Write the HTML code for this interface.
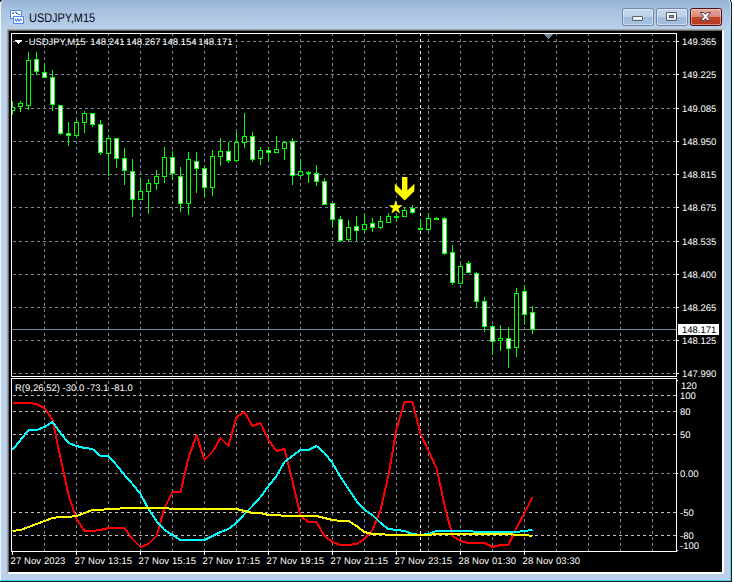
<!DOCTYPE html>
<html><head><meta charset="utf-8"><title>USDJPY,M15</title>
<style>
html,body{margin:0;padding:0;background:#fff;}
body{width:734px;height:582px;position:relative;overflow:hidden;font-family:"Liberation Sans",sans-serif;}
#win{position:absolute;left:0;top:0;width:731px;height:581px;background:linear-gradient(#98b4d4 0px,#a9c3e0 12px,#b9d1ea 30px,#b9d1ea 100%);border-right:1px solid #1c1c1c;border-bottom:1px solid #1c1c1c;}
#hl{position:absolute;left:0;top:0;width:729px;height:580px;border-left:1px solid #eef4fa;border-right:1px solid transparent;border-bottom:1px solid #3fd2f5;}
#frame{position:absolute;left:7px;top:29px;width:713px;height:541px;background:#000;border-style:solid;border-width:2px;border-color:#a0a0a0 #fff #fff #a0a0a0;}
#frame2{position:absolute;left:8px;top:30px;width:713px;height:541px;border-top:1px solid #696969;border-left:1px solid #696969;}
.t{position:absolute;font-size:9.5px;line-height:12px;white-space:pre;text-rendering:geometricPrecision;}
#title{position:absolute;left:28.5px;top:10px;font-size:12.5px;line-height:16px;letter-spacing:0px;color:#0a0a20;white-space:pre;text-rendering:geometricPrecision;transform:scaleX(0.875);transform-origin:0 0;}
.btn{position:absolute;top:8px;height:16px;width:30px;border:1px solid #6f87a5;border-radius:2.5px;background:linear-gradient(#c4d6ec 0,#bcd0e9 48%,#a0badb 52%,#a8c2e0 100%);box-shadow:inset 0 0 0 1px rgba(255,255,255,.45);}
#close{border-color:#4a1020;background:linear-gradient(#e9a99c 0,#d9897b 48%,#c2452b 52%,#b9391f 100%);box-shadow:inset 0 0 0 1px rgba(255,220,210,.5);}
</style></head><body>
<div id="win"></div><div id="hl"></div><div style="position:absolute;left:730px;top:0;width:1px;height:581px;background:linear-gradient(#c4eefa 0,#9fe4f8 14px,#5fd6f5 40px,#4fd3f5 100%)"></div><div style="position:absolute;left:0;top:0;width:2px;height:2px;background:#222"></div><div style="position:absolute;left:1px;top:1px;width:1px;height:1px;background:#fff"></div><div style="position:absolute;left:2px;top:0;width:1px;height:1px;background:#dde6f0"></div><div style="position:absolute;left:730px;top:0;width:1px;height:2px;background:#222;z-index:5"></div><div style="position:absolute;left:731px;top:0;width:1px;height:2px;background:#e8e8e8;z-index:5"></div><div style="position:absolute;left:729px;top:0;width:1px;height:2px;background:#d8f2fa"></div>
<div id="title">USDJPY,M15</div>
<svg width="18" height="18" viewBox="0 0 18 18" style="position:absolute;left:8px;top:8px" shape-rendering="crispEdges">
<rect x="1" y="1" width="16" height="16" fill="#c3d8ef" opacity="0.25"/>
<rect x="2.5" y="2.5" width="11" height="8" fill="#fff" stroke="#5a94f6"/><rect x="2.5" y="2.5" width="11" height="8" fill="none" stroke="#3f7de8" stroke-dasharray="1 1"/>
<rect x="3" y="3" width="10" height="7" fill="none" stroke="#7ab0ff" stroke-width="0"/>
<path d="M4 5h2M5 4v1M7 4h2M8 5h2M10 6h2" stroke="#3b78ee" fill="none"/>
<rect x="5.5" y="8.5" width="10" height="7" fill="#fff" stroke="#5a94f6"/><rect x="5.5" y="8.5" width="10" height="7" fill="none" stroke="#3f7de8" stroke-dasharray="1 1"/>
<path d="M7 10.5l1.3 3l1.4-3l1.4 3l1.4-3l1 2" stroke="#2f6fe6" fill="none" stroke-width="1" shape-rendering="auto"/>
</svg>
<div class="btn" style="left:622px"><div style="position:absolute;left:9px;top:7px;width:9px;height:3px;background:linear-gradient(#fff,#e4e8ee);border:1px solid #565e6c;border-radius:1px"></div></div>
<div class="btn" style="left:656px"><div style="position:absolute;left:9px;top:3px;width:9px;height:7px;background:linear-gradient(#fff,#e0e4ea);border:1px solid #565e6c;border-radius:1px"></div><div style="position:absolute;left:12px;top:6px;width:3px;height:1px;background:#7a9ac6;border:1px solid #4d5a70"></div></div>
<div class="btn" id="close" style="left:690px"><svg width="13" height="11" viewBox="0 0 13 11" style="position:absolute;left:8px;top:2px"><path d="M1.5 1.5h3.4l1.6 2l1.6-2h3.4l-3.2 4l3.2 4h-3.4l-1.6-2l-1.6 2h-3.4l3.2-4z" fill="#fff" stroke="#4a4450" stroke-width="1" stroke-linejoin="round"/></svg></div>
<div id="frame"></div><div id="frame2"></div>
<svg width="734" height="582" viewBox="0 0 734 582" style="position:absolute;left:0;top:0" shape-rendering="crispEdges"><clipPath id="cv"><rect x="12" y="34" width="664" height="342"/><rect x="12" y="379" width="664" height="172"/></clipPath><line x1="13" y1="41.5" x2="676" y2="41.5" stroke="#778899" stroke-dasharray="3 3"/><line x1="13" y1="74.5" x2="676" y2="74.5" stroke="#778899" stroke-dasharray="3 3"/><line x1="13" y1="108.5" x2="676" y2="108.5" stroke="#778899" stroke-dasharray="3 3"/><line x1="13" y1="141.5" x2="676" y2="141.5" stroke="#778899" stroke-dasharray="3 3"/><line x1="13" y1="174.5" x2="676" y2="174.5" stroke="#778899" stroke-dasharray="3 3"/><line x1="13" y1="207.5" x2="676" y2="207.5" stroke="#778899" stroke-dasharray="3 3"/><line x1="13" y1="241.5" x2="676" y2="241.5" stroke="#778899" stroke-dasharray="3 3"/><line x1="13" y1="274.5" x2="676" y2="274.5" stroke="#778899" stroke-dasharray="3 3"/><line x1="13" y1="307.5" x2="676" y2="307.5" stroke="#778899" stroke-dasharray="3 3"/><line x1="13" y1="340.5" x2="676" y2="340.5" stroke="#778899" stroke-dasharray="3 3"/><line x1="13" y1="373.5" x2="676" y2="373.5" stroke="#778899" stroke-dasharray="3 3"/><line x1="44.5" y1="33" x2="44.5" y2="376" stroke="#778899" stroke-dasharray="3 3" clip-path="url(#cv)"/><line x1="44.5" y1="375" x2="44.5" y2="551" stroke="#778899" stroke-dasharray="3 3" clip-path="url(#cv)"/><line x1="76.5" y1="33" x2="76.5" y2="376" stroke="#778899" stroke-dasharray="3 3" clip-path="url(#cv)"/><line x1="76.5" y1="375" x2="76.5" y2="551" stroke="#778899" stroke-dasharray="3 3" clip-path="url(#cv)"/><line x1="108.5" y1="33" x2="108.5" y2="376" stroke="#778899" stroke-dasharray="3 3" clip-path="url(#cv)"/><line x1="108.5" y1="375" x2="108.5" y2="551" stroke="#778899" stroke-dasharray="3 3" clip-path="url(#cv)"/><line x1="140.5" y1="33" x2="140.5" y2="376" stroke="#778899" stroke-dasharray="3 3" clip-path="url(#cv)"/><line x1="140.5" y1="375" x2="140.5" y2="551" stroke="#778899" stroke-dasharray="3 3" clip-path="url(#cv)"/><line x1="172.5" y1="33" x2="172.5" y2="376" stroke="#778899" stroke-dasharray="3 3" clip-path="url(#cv)"/><line x1="172.5" y1="375" x2="172.5" y2="551" stroke="#778899" stroke-dasharray="3 3" clip-path="url(#cv)"/><line x1="204.5" y1="33" x2="204.5" y2="376" stroke="#778899" stroke-dasharray="3 3" clip-path="url(#cv)"/><line x1="204.5" y1="375" x2="204.5" y2="551" stroke="#778899" stroke-dasharray="3 3" clip-path="url(#cv)"/><line x1="236.5" y1="33" x2="236.5" y2="376" stroke="#778899" stroke-dasharray="3 3" clip-path="url(#cv)"/><line x1="236.5" y1="375" x2="236.5" y2="551" stroke="#778899" stroke-dasharray="3 3" clip-path="url(#cv)"/><line x1="268.5" y1="33" x2="268.5" y2="376" stroke="#778899" stroke-dasharray="3 3" clip-path="url(#cv)"/><line x1="268.5" y1="375" x2="268.5" y2="551" stroke="#778899" stroke-dasharray="3 3" clip-path="url(#cv)"/><line x1="300.5" y1="33" x2="300.5" y2="376" stroke="#778899" stroke-dasharray="3 3" clip-path="url(#cv)"/><line x1="300.5" y1="375" x2="300.5" y2="551" stroke="#778899" stroke-dasharray="3 3" clip-path="url(#cv)"/><line x1="332.5" y1="33" x2="332.5" y2="376" stroke="#778899" stroke-dasharray="3 3" clip-path="url(#cv)"/><line x1="332.5" y1="375" x2="332.5" y2="551" stroke="#778899" stroke-dasharray="3 3" clip-path="url(#cv)"/><line x1="364.5" y1="33" x2="364.5" y2="376" stroke="#778899" stroke-dasharray="3 3" clip-path="url(#cv)"/><line x1="364.5" y1="375" x2="364.5" y2="551" stroke="#778899" stroke-dasharray="3 3" clip-path="url(#cv)"/><line x1="396.5" y1="33" x2="396.5" y2="376" stroke="#778899" stroke-dasharray="3 3" clip-path="url(#cv)"/><line x1="396.5" y1="375" x2="396.5" y2="551" stroke="#778899" stroke-dasharray="3 3" clip-path="url(#cv)"/><line x1="428.5" y1="33" x2="428.5" y2="376" stroke="#778899" stroke-dasharray="3 3" clip-path="url(#cv)"/><line x1="428.5" y1="375" x2="428.5" y2="551" stroke="#778899" stroke-dasharray="3 3" clip-path="url(#cv)"/><line x1="460.5" y1="33" x2="460.5" y2="376" stroke="#778899" stroke-dasharray="3 3" clip-path="url(#cv)"/><line x1="460.5" y1="375" x2="460.5" y2="551" stroke="#778899" stroke-dasharray="3 3" clip-path="url(#cv)"/><line x1="492.5" y1="33" x2="492.5" y2="376" stroke="#778899" stroke-dasharray="3 3" clip-path="url(#cv)"/><line x1="492.5" y1="375" x2="492.5" y2="551" stroke="#778899" stroke-dasharray="3 3" clip-path="url(#cv)"/><line x1="524.5" y1="33" x2="524.5" y2="376" stroke="#778899" stroke-dasharray="3 3" clip-path="url(#cv)"/><line x1="524.5" y1="375" x2="524.5" y2="551" stroke="#778899" stroke-dasharray="3 3" clip-path="url(#cv)"/><line x1="556.5" y1="33" x2="556.5" y2="376" stroke="#778899" stroke-dasharray="3 3" clip-path="url(#cv)"/><line x1="556.5" y1="375" x2="556.5" y2="551" stroke="#778899" stroke-dasharray="3 3" clip-path="url(#cv)"/><line x1="588.5" y1="33" x2="588.5" y2="376" stroke="#778899" stroke-dasharray="3 3" clip-path="url(#cv)"/><line x1="588.5" y1="375" x2="588.5" y2="551" stroke="#778899" stroke-dasharray="3 3" clip-path="url(#cv)"/><line x1="620.5" y1="33" x2="620.5" y2="376" stroke="#778899" stroke-dasharray="3 3" clip-path="url(#cv)"/><line x1="620.5" y1="375" x2="620.5" y2="551" stroke="#778899" stroke-dasharray="3 3" clip-path="url(#cv)"/><line x1="652.5" y1="33" x2="652.5" y2="376" stroke="#778899" stroke-dasharray="3 3" clip-path="url(#cv)"/><line x1="652.5" y1="375" x2="652.5" y2="551" stroke="#778899" stroke-dasharray="3 3" clip-path="url(#cv)"/><line x1="420.5" y1="33" x2="420.5" y2="376" stroke="#ffffff" stroke-dasharray="3 3" clip-path="url(#cv)"/><line x1="420.5" y1="375" x2="420.5" y2="551" stroke="#ffffff" stroke-dasharray="3 3" clip-path="url(#cv)"/><line x1="13" y1="395.5" x2="676" y2="395.5" stroke="#c0c0c0" stroke-dasharray="3 3"/><line x1="13" y1="411.5" x2="676" y2="411.5" stroke="#c0c0c0" stroke-dasharray="3 3"/><line x1="13" y1="434.5" x2="676" y2="434.5" stroke="#c0c0c0" stroke-dasharray="3 3"/><line x1="13" y1="512.5" x2="676" y2="512.5" stroke="#c0c0c0" stroke-dasharray="3 3"/><line x1="13" y1="535.5" x2="676" y2="535.5" stroke="#c0c0c0" stroke-dasharray="3 3"/><line x1="13" y1="473.5" x2="676" y2="473.5" stroke="#778899" stroke-dasharray="3 3"/><rect x="12" y="329" width="664" height="1" fill="#778899"/><g fill="#fff"><rect x="11" y="33" width="666" height="1"/><rect x="11" y="376" width="666" height="1"/><rect x="11" y="33" width="1" height="344"/><rect x="676" y="33" width="1" height="344"/><rect x="11" y="378" width="666" height="1"/><rect x="11" y="551" width="666" height="1"/><rect x="11" y="378" width="1" height="174"/><rect x="676" y="378" width="1" height="174"/><rect x="677" y="41" width="2" height="1"/><rect x="677" y="74" width="2" height="1"/><rect x="677" y="108" width="2" height="1"/><rect x="677" y="141" width="2" height="1"/><rect x="677" y="174" width="2" height="1"/><rect x="677" y="207" width="2" height="1"/><rect x="677" y="241" width="2" height="1"/><rect x="677" y="274" width="2" height="1"/><rect x="677" y="307" width="2" height="1"/><rect x="677" y="340" width="2" height="1"/><rect x="677" y="373" width="2" height="1"/><rect x="677" y="380" width="1" height="1"/><rect x="677" y="473" width="1" height="1"/><rect x="677" y="550" width="1" height="1"/><rect x="12" y="552" width="1" height="3"/><rect x="76" y="552" width="1" height="3"/><rect x="140" y="552" width="1" height="3"/><rect x="204" y="552" width="1" height="3"/><rect x="268" y="552" width="1" height="3"/><rect x="332" y="552" width="1" height="3"/><rect x="396" y="552" width="1" height="3"/><rect x="460" y="552" width="1" height="3"/><rect x="524" y="552" width="1" height="3"/></g><path d="M544 34h9v1h-1v1h-1v1h-1v1h-1v1h-1v-1h-1v-1h-1v-1h-1v-1h-1z" fill="#778899"/><clipPath id="cm"><rect x="12" y="34" width="664" height="342"/></clipPath><g clip-path="url(#cm)"><rect x="12" y="101" width="1" height="14" fill="#00ff00"/><rect x="10" y="107" width="5" height="4" fill="#00ff00"/><rect x="11" y="108" width="3" height="2" fill="#000"/><rect x="20" y="101" width="1" height="11" fill="#00ff00"/><rect x="18" y="103" width="5" height="4" fill="#00ff00"/><rect x="19" y="104" width="3" height="2" fill="#000"/><rect x="28" y="52" width="1" height="58" fill="#00ff00"/><rect x="26" y="60" width="5" height="46" fill="#00ff00"/><rect x="27" y="61" width="3" height="44" fill="#000"/><rect x="36" y="52" width="1" height="23" fill="#00ff00"/><rect x="34" y="59" width="5" height="13" fill="#00ff00"/><rect x="35" y="60" width="3" height="11" fill="#fff"/><rect x="44" y="64" width="1" height="14" fill="#00ff00"/><rect x="42" y="72" width="5" height="6" fill="#00ff00"/><rect x="43" y="73" width="3" height="4" fill="#fff"/><rect x="52" y="70" width="1" height="41" fill="#00ff00"/><rect x="50" y="77" width="5" height="28" fill="#00ff00"/><rect x="51" y="78" width="3" height="26" fill="#fff"/><rect x="60" y="105" width="1" height="30" fill="#00ff00"/><rect x="58" y="105" width="5" height="29" fill="#00ff00"/><rect x="59" y="106" width="3" height="27" fill="#fff"/><rect x="68" y="122" width="1" height="24" fill="#00ff00"/><rect x="66" y="133" width="5" height="3" fill="#00ff00"/><rect x="67" y="134" width="3" height="1" fill="#fff"/><rect x="76" y="119" width="1" height="19" fill="#00ff00"/><rect x="74" y="122" width="5" height="14" fill="#00ff00"/><rect x="75" y="123" width="3" height="12" fill="#000"/><rect x="84" y="111" width="1" height="22" fill="#00ff00"/><rect x="82" y="113" width="5" height="10" fill="#00ff00"/><rect x="83" y="114" width="3" height="8" fill="#000"/><rect x="92" y="113" width="1" height="14" fill="#00ff00"/><rect x="90" y="113" width="5" height="12" fill="#00ff00"/><rect x="91" y="114" width="3" height="10" fill="#fff"/><rect x="100" y="120" width="1" height="35" fill="#00ff00"/><rect x="98" y="124" width="5" height="29" fill="#00ff00"/><rect x="99" y="125" width="3" height="27" fill="#fff"/><rect x="108" y="135" width="1" height="41" fill="#00ff00"/><rect x="106" y="138" width="5" height="16" fill="#00ff00"/><rect x="107" y="139" width="3" height="14" fill="#000"/><rect x="116" y="138" width="1" height="30" fill="#00ff00"/><rect x="114" y="138" width="5" height="21" fill="#00ff00"/><rect x="115" y="139" width="3" height="19" fill="#fff"/><rect x="124" y="148" width="1" height="37" fill="#00ff00"/><rect x="122" y="158" width="5" height="13" fill="#00ff00"/><rect x="123" y="159" width="3" height="11" fill="#fff"/><rect x="132" y="159" width="1" height="58" fill="#00ff00"/><rect x="130" y="171" width="5" height="29" fill="#00ff00"/><rect x="131" y="172" width="3" height="27" fill="#fff"/><rect x="140" y="178" width="1" height="22" fill="#00ff00"/><rect x="138" y="191" width="5" height="9" fill="#00ff00"/><rect x="139" y="192" width="3" height="7" fill="#000"/><rect x="148" y="179" width="1" height="35" fill="#00ff00"/><rect x="146" y="183" width="5" height="9" fill="#00ff00"/><rect x="147" y="184" width="3" height="7" fill="#000"/><rect x="156" y="170" width="1" height="20" fill="#00ff00"/><rect x="154" y="176" width="5" height="8" fill="#00ff00"/><rect x="155" y="177" width="3" height="6" fill="#000"/><rect x="164" y="147" width="1" height="36" fill="#00ff00"/><rect x="162" y="157" width="5" height="20" fill="#00ff00"/><rect x="163" y="158" width="3" height="18" fill="#000"/><rect x="172" y="151" width="1" height="29" fill="#00ff00"/><rect x="170" y="157" width="5" height="17" fill="#00ff00"/><rect x="171" y="158" width="3" height="15" fill="#fff"/><rect x="180" y="167" width="1" height="45" fill="#00ff00"/><rect x="178" y="176" width="5" height="28" fill="#00ff00"/><rect x="179" y="177" width="3" height="26" fill="#fff"/><rect x="188" y="152" width="1" height="63" fill="#00ff00"/><rect x="186" y="159" width="5" height="45" fill="#00ff00"/><rect x="187" y="160" width="3" height="43" fill="#000"/><rect x="196" y="152" width="1" height="41" fill="#00ff00"/><rect x="194" y="161" width="5" height="8" fill="#00ff00"/><rect x="195" y="162" width="3" height="6" fill="#fff"/><rect x="204" y="166" width="1" height="32" fill="#00ff00"/><rect x="202" y="168" width="5" height="20" fill="#00ff00"/><rect x="203" y="169" width="3" height="18" fill="#fff"/><rect x="212" y="150" width="1" height="46" fill="#00ff00"/><rect x="210" y="156" width="5" height="32" fill="#00ff00"/><rect x="211" y="157" width="3" height="30" fill="#000"/><rect x="220" y="138" width="1" height="28" fill="#00ff00"/><rect x="218" y="151" width="5" height="6" fill="#00ff00"/><rect x="219" y="152" width="3" height="4" fill="#000"/><rect x="228" y="142" width="1" height="21" fill="#00ff00"/><rect x="226" y="151" width="5" height="10" fill="#00ff00"/><rect x="227" y="152" width="3" height="8" fill="#fff"/><rect x="236" y="132" width="1" height="30" fill="#00ff00"/><rect x="234" y="142" width="5" height="19" fill="#00ff00"/><rect x="235" y="143" width="3" height="17" fill="#000"/><rect x="244" y="113" width="1" height="35" fill="#00ff00"/><rect x="242" y="136" width="5" height="7" fill="#00ff00"/><rect x="243" y="137" width="3" height="5" fill="#000"/><rect x="252" y="132" width="1" height="30" fill="#00ff00"/><rect x="250" y="136" width="5" height="24" fill="#00ff00"/><rect x="251" y="137" width="3" height="22" fill="#fff"/><rect x="260" y="147" width="1" height="18" fill="#00ff00"/><rect x="258" y="150" width="5" height="9" fill="#00ff00"/><rect x="259" y="151" width="3" height="7" fill="#000"/><rect x="268" y="147" width="1" height="15" fill="#00ff00"/><rect x="266" y="150" width="5" height="3" fill="#00ff00"/><rect x="267" y="151" width="3" height="1" fill="#fff"/><rect x="276" y="136" width="1" height="17" fill="#00ff00"/><rect x="274" y="149" width="5" height="4" fill="#00ff00"/><rect x="275" y="150" width="3" height="2" fill="#000"/><rect x="284" y="141" width="1" height="19" fill="#00ff00"/><rect x="282" y="142" width="5" height="7" fill="#00ff00"/><rect x="283" y="143" width="3" height="5" fill="#000"/><rect x="292" y="138" width="1" height="47" fill="#00ff00"/><rect x="290" y="141" width="5" height="35" fill="#00ff00"/><rect x="291" y="142" width="3" height="33" fill="#fff"/><rect x="300" y="159" width="1" height="18" fill="#00ff00"/><rect x="298" y="171" width="5" height="5" fill="#00ff00"/><rect x="299" y="172" width="3" height="3" fill="#000"/><rect x="308" y="171" width="1" height="12" fill="#00ff00"/><rect x="306" y="172" width="5" height="2" fill="#00ff00"/><rect x="316" y="165" width="1" height="21" fill="#00ff00"/><rect x="314" y="173" width="5" height="9" fill="#00ff00"/><rect x="315" y="174" width="3" height="7" fill="#fff"/><rect x="324" y="178" width="1" height="27" fill="#00ff00"/><rect x="322" y="181" width="5" height="24" fill="#00ff00"/><rect x="323" y="182" width="3" height="22" fill="#fff"/><rect x="332" y="203" width="1" height="24" fill="#00ff00"/><rect x="330" y="203" width="5" height="17" fill="#00ff00"/><rect x="331" y="204" width="3" height="15" fill="#fff"/><rect x="340" y="216" width="1" height="26" fill="#00ff00"/><rect x="338" y="219" width="5" height="22" fill="#00ff00"/><rect x="339" y="220" width="3" height="20" fill="#fff"/><rect x="348" y="220" width="1" height="22" fill="#00ff00"/><rect x="346" y="227" width="5" height="13" fill="#00ff00"/><rect x="347" y="228" width="3" height="11" fill="#000"/><rect x="356" y="216" width="1" height="25" fill="#00ff00"/><rect x="354" y="226" width="5" height="5" fill="#00ff00"/><rect x="355" y="227" width="3" height="3" fill="#fff"/><rect x="364" y="214" width="1" height="19" fill="#00ff00"/><rect x="362" y="224" width="5" height="6" fill="#00ff00"/><rect x="363" y="225" width="3" height="4" fill="#000"/><rect x="372" y="218" width="1" height="14" fill="#00ff00"/><rect x="370" y="223" width="5" height="5" fill="#00ff00"/><rect x="371" y="224" width="3" height="3" fill="#fff"/><rect x="380" y="216" width="1" height="13" fill="#00ff00"/><rect x="378" y="221" width="5" height="7" fill="#00ff00"/><rect x="379" y="222" width="3" height="5" fill="#000"/><rect x="388" y="213" width="1" height="10" fill="#00ff00"/><rect x="386" y="216" width="5" height="7" fill="#00ff00"/><rect x="387" y="217" width="3" height="5" fill="#000"/><rect x="396" y="213" width="1" height="8" fill="#00ff00"/><rect x="394" y="216" width="5" height="2" fill="#00ff00"/><rect x="404" y="207" width="1" height="10" fill="#00ff00"/><rect x="402" y="210" width="5" height="7" fill="#00ff00"/><rect x="403" y="211" width="3" height="5" fill="#000"/><rect x="412" y="205" width="1" height="9" fill="#00ff00"/><rect x="410" y="208" width="5" height="5" fill="#00ff00"/><rect x="411" y="209" width="3" height="3" fill="#fff"/><rect x="420" y="219" width="1" height="11" fill="#00ff00"/><rect x="418" y="228" width="5" height="2" fill="#00ff00"/><rect x="428" y="213" width="1" height="18" fill="#00ff00"/><rect x="426" y="218" width="5" height="12" fill="#00ff00"/><rect x="427" y="219" width="3" height="10" fill="#000"/><rect x="436" y="217" width="1" height="3" fill="#00ff00"/><rect x="434" y="218" width="5" height="2" fill="#00ff00"/><rect x="444" y="217" width="1" height="38" fill="#00ff00"/><rect x="442" y="218" width="5" height="36" fill="#00ff00"/><rect x="443" y="219" width="3" height="34" fill="#fff"/><rect x="452" y="245" width="1" height="40" fill="#00ff00"/><rect x="450" y="252" width="5" height="31" fill="#00ff00"/><rect x="451" y="253" width="3" height="29" fill="#fff"/><rect x="460" y="264" width="1" height="20" fill="#00ff00"/><rect x="458" y="266" width="5" height="18" fill="#00ff00"/><rect x="459" y="267" width="3" height="16" fill="#000"/><rect x="468" y="261" width="1" height="12" fill="#00ff00"/><rect x="466" y="263" width="5" height="10" fill="#00ff00"/><rect x="467" y="264" width="3" height="8" fill="#fff"/><rect x="476" y="272" width="1" height="36" fill="#00ff00"/><rect x="474" y="273" width="5" height="29" fill="#00ff00"/><rect x="475" y="274" width="3" height="27" fill="#fff"/><rect x="484" y="297" width="1" height="35" fill="#00ff00"/><rect x="482" y="301" width="5" height="26" fill="#00ff00"/><rect x="483" y="302" width="3" height="24" fill="#fff"/><rect x="492" y="325" width="1" height="30" fill="#00ff00"/><rect x="490" y="326" width="5" height="16" fill="#00ff00"/><rect x="491" y="327" width="3" height="14" fill="#fff"/><rect x="500" y="325" width="1" height="26" fill="#00ff00"/><rect x="498" y="338" width="5" height="3" fill="#00ff00"/><rect x="499" y="339" width="3" height="1" fill="#000"/><rect x="508" y="327" width="1" height="41" fill="#00ff00"/><rect x="506" y="338" width="5" height="11" fill="#00ff00"/><rect x="507" y="339" width="3" height="9" fill="#fff"/><rect x="516" y="288" width="1" height="69" fill="#00ff00"/><rect x="514" y="293" width="5" height="55" fill="#00ff00"/><rect x="515" y="294" width="3" height="53" fill="#000"/><rect x="524" y="285" width="1" height="40" fill="#00ff00"/><rect x="522" y="291" width="5" height="24" fill="#00ff00"/><rect x="523" y="292" width="3" height="22" fill="#fff"/><rect x="532" y="306" width="1" height="28" fill="#00ff00"/><rect x="530" y="312" width="5" height="18" fill="#00ff00"/><rect x="531" y="313" width="3" height="16" fill="#fff"/></g><g fill="#ffff00" shape-rendering="auto"><path d="M402 177h5.4v13.6l7-6.9v7.3l-9.7 9.6l-9.9-9.6v-7.3l7.2 6.9z"/><polygon points="395.70,200.20 397.40,205.25 402.74,205.31 398.46,208.50 400.05,213.59 395.70,210.50 391.35,213.59 392.94,208.50 388.66,205.31 394.00,205.25"/></g><clipPath id="cs"><rect x="12" y="379" width="664" height="172"/></clipPath><g clip-path="url(#cs)" fill="none" stroke-width="2" stroke-linejoin="round"><polyline stroke="#ff0000" points="12.5,403 20.5,403 28.5,403 36.5,404 44.5,408 52.5,420 60.5,458 68.5,495 76.5,519 84.5,531 92.5,531 100.5,530 108.5,528 116.5,528 124.5,528 132.5,539 140.5,547 148.5,544 156.5,536 164.5,508 172.5,492 180.5,492 188.5,458 196.5,435 204.5,460 212.5,452 220.5,438 228.5,446 236.5,417 244.5,412 252.5,426 260.5,423 268.5,440 276.5,451 284.5,449 292.5,481 300.5,516 308.5,522 316.5,522 324.5,536 332.5,542 340.5,545 348.5,545 356.5,544 364.5,539 372.5,530 380.5,510 388.5,475 396.5,429 404.5,402 412.5,402 420.5,434 428.5,451 436.5,468 444.5,505 452.5,536 460.5,541 468.5,543 476.5,543 484.5,543 492.5,547 500.5,545 508.5,545 516.5,528 524.5,513 532.5,497"/><polyline stroke="#00ffff" points="12.5,450 20.5,440 28.5,430 36.5,430 44.5,427 52.5,422 60.5,433 68.5,443 76.5,446 84.5,448 92.5,449 100.5,456 108.5,456 116.5,465 124.5,475 132.5,484 140.5,494 148.5,509 156.5,521 164.5,530 172.5,535 180.5,540 188.5,540 196.5,540 204.5,540 212.5,536 220.5,532 228.5,529 236.5,523 244.5,514 252.5,506 260.5,497 268.5,486 276.5,476 284.5,462 292.5,456 300.5,450 308.5,450 316.5,446 324.5,453 332.5,463 340.5,477 348.5,489 356.5,501 364.5,510 372.5,515 380.5,523 388.5,529 396.5,530 404.5,531 412.5,534 420.5,535 428.5,534 436.5,531 444.5,531 452.5,531 460.5,531 468.5,531 476.5,532 484.5,532 492.5,532 500.5,532 508.5,532 516.5,532 524.5,531 532.5,530"/><polyline stroke="#ffff00" points="12.5,531 20.5,530 28.5,527 36.5,524 44.5,521 52.5,518 60.5,517 68.5,517 76.5,516 84.5,513 92.5,510 100.5,510 108.5,509 116.5,509 124.5,508 132.5,508 140.5,508 148.5,508 156.5,508 164.5,508 172.5,509 180.5,509 188.5,509 196.5,509 204.5,509 212.5,509 220.5,509 228.5,509 236.5,509 244.5,511 252.5,513 260.5,513 268.5,515 276.5,515 284.5,516 292.5,516 300.5,516 308.5,516 316.5,516 324.5,518 332.5,520 340.5,521 348.5,521 356.5,526 364.5,532 372.5,534 380.5,534 388.5,535 396.5,535 404.5,535 412.5,535 420.5,535 428.5,535 436.5,534 444.5,534 452.5,534 460.5,534 468.5,534 476.5,534 484.5,534 492.5,534 500.5,534 508.5,534 516.5,535 524.5,535 532.5,536"/></g><path d="M15 40h7v1h-1v1h-1v1h-1v1h-1v-1h-1v-1h-1v-1h-1z" fill="#fff"/></svg>
<span class="t" style="left:682px;top:37px;color:#fff;letter-spacing:0px;">149.365</span><span class="t" style="left:682px;top:70px;color:#fff;letter-spacing:0px;">149.225</span><span class="t" style="left:682px;top:104px;color:#fff;letter-spacing:0px;">149.085</span><span class="t" style="left:682px;top:137px;color:#fff;letter-spacing:0px;">148.950</span><span class="t" style="left:682px;top:170px;color:#fff;letter-spacing:0px;">148.815</span><span class="t" style="left:682px;top:203px;color:#fff;letter-spacing:0px;">148.675</span><span class="t" style="left:682px;top:237px;color:#fff;letter-spacing:0px;">148.535</span><span class="t" style="left:682px;top:270px;color:#fff;letter-spacing:0px;">148.400</span><span class="t" style="left:682px;top:303px;color:#fff;letter-spacing:0px;">148.265</span><span class="t" style="left:682px;top:336px;color:#fff;letter-spacing:0px;">148.125</span><span class="t" style="left:682px;top:369px;color:#fff;letter-spacing:0px;">147.990</span><span class="t" style="left:680px;top:391px;color:#fff;letter-spacing:0px;">100</span><span class="t" style="left:680px;top:407px;color:#fff;letter-spacing:0px;">80</span><span class="t" style="left:680px;top:430px;color:#fff;letter-spacing:0px;">50</span><span class="t" style="left:680px;top:469px;color:#fff;letter-spacing:0px;">0.00</span><span class="t" style="left:680px;top:508px;color:#fff;letter-spacing:0px;">-50</span><span class="t" style="left:680px;top:531px;color:#fff;letter-spacing:0px;">-80</span><span class="t" style="left:681px;top:381px;color:#fff;letter-spacing:0px;">120</span><span class="t" style="left:680px;top:541px;color:#fff;letter-spacing:0px;">-100</span><div style="position:absolute;left:678px;top:324px;width:41px;height:11px;background:#fff"></div><span class="t" style="left:682px;top:325px;color:#000;letter-spacing:0px;">148.171</span><span class="t" style="left:28.7px;top:37px;color:#fff;letter-spacing:-0.05px;">USDJPY,M15</span><span class="t" style="left:90.3px;top:37px;color:#fff;letter-spacing:0px;">148.241</span><span class="t" style="left:126.3px;top:37px;color:#fff;letter-spacing:0px;">148.267</span><span class="t" style="left:162.3px;top:37px;color:#fff;letter-spacing:0px;">148.154</span><span class="t" style="left:198.3px;top:37px;color:#fff;letter-spacing:0px;">148.171</span><span class="t" style="left:15px;top:383px;color:#fff;letter-spacing:0px;">R(9,26,52) -30.0 -73.1 -81.0</span><span class="t" style="left:10.5px;top:556px;color:#fff;letter-spacing:0.1px;">27 Nov 2023</span><span class="t" style="left:74.5px;top:556px;color:#fff;letter-spacing:0.1px;">27 Nov 13:15</span><span class="t" style="left:138.5px;top:556px;color:#fff;letter-spacing:0.1px;">27 Nov 15:15</span><span class="t" style="left:202.5px;top:556px;color:#fff;letter-spacing:0.1px;">27 Nov 17:15</span><span class="t" style="left:266.5px;top:556px;color:#fff;letter-spacing:0.1px;">27 Nov 19:15</span><span class="t" style="left:330.5px;top:556px;color:#fff;letter-spacing:0.1px;">27 Nov 21:15</span><span class="t" style="left:394.5px;top:556px;color:#fff;letter-spacing:0.1px;">27 Nov 23:15</span><span class="t" style="left:458.5px;top:556px;color:#fff;letter-spacing:0.1px;">28 Nov 01:30</span><span class="t" style="left:522.5px;top:556px;color:#fff;letter-spacing:0.1px;">28 Nov 03:30</span>
</body></html>
